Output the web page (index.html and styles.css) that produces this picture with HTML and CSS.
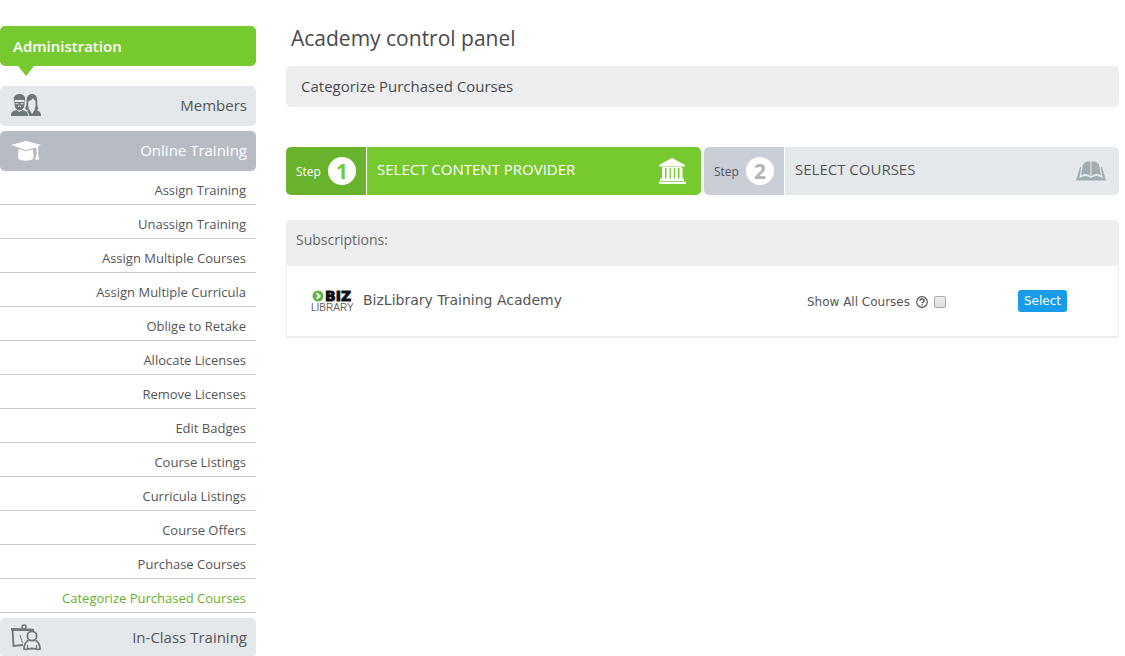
FILE: index.html
```html
<!DOCTYPE html>
<html lang="en">
<head>
    <meta charset="UTF-8">
    <meta name="viewport" content="width=device-width, initial-scale=1.0">
    <title>Academy control panel</title>
    <link rel="stylesheet" href="styles.css">
</head>
<body>
    <div class="page">
        <nav class="sidebar">
            <h2 class="sidebar-title">Administration</h2>

            <a href="#" class="menu-item">
                <svg class="menu-icon" viewBox="0 0 30 24" fill="#6f7679">
                    <path d="M3 7C2 2 5 0 8.500 0S15 2 14 7l-.6 1.200-.2-2.200H3.800l-.2 2.200z"/>
                    <path d="M3.500 8h10v2.500c0 3-2.300 6-5 6s-5-3-5-6z"/>
                    <path d="M4.500 6.500h8v1h-8zM4.500 9.200h3v1h-3zM9.500 9.200h3v1h-3z" fill="#e4e8eb"/>
                    <path d="M7 12.500q1.500-1 3 0" stroke="#e4e8eb" fill="none"/>
                    <path d="M0 22c0-4 1.500-5 5.500-6l3 2 3-2c4 1 5.500 2 5.500 6z"/>
                    <path d="M21 0c-4 0-5.500 3-5.500 8 0 3-.5 5-1.500 7l3 1.500 1-1.500c-1-2-1-5-.5-8 2 0 4-1.500 4.500-3 .5 1.500 2 2 2.500 3.500.3 3 0 5.500-1 7.500l1 1.500 3-1.500c-1-2-1.200-4-1.200-7 0-5-1.300-8-5.300-8z"/>
                    <path d="M18 22c0-2-1-4-2-5l2.500-1.500L21 20l3-4.500c4 1 6 2.500 6 6.500z"/>
                </svg>
                <span>Members</span>
            </a>

            <a href="#" class="menu-item active">
                <svg class="menu-icon" viewBox="0 0 30 24" fill="#fff">
                    <path d="M0 6l15-4 15 4-3 1.500.3 8 .7 5-3.500.5.5-5 .8-.5-.3-7L15 11z"/>
                    <path d="M7.500 10l7.500 2.300 7-1.800.5 9c-3.500 3-11.500 3-15.500 0z"/>
                </svg>
                <span>Online Training</span>
            </a>

            <ul class="submenu">
                <li><a href="#">Assign Training</a></li>
                <li><a href="#">Unassign Training</a></li>
                <li><a href="#">Assign Multiple Courses</a></li>
                <li><a href="#">Assign Multiple Curricula</a></li>
                <li><a href="#">Oblige to Retake</a></li>
                <li><a href="#">Allocate Licenses</a></li>
                <li><a href="#">Remove Licenses</a></li>
                <li><a href="#">Edit Badges</a></li>
                <li><a href="#">Course Listings</a></li>
                <li><a href="#">Curricula Listings</a></li>
                <li><a href="#">Course Offers</a></li>
                <li><a href="#">Purchase Courses</a></li>
                <li><a href="#" class="current">Categorize Purchased Courses</a></li>
            </ul>

            <a href="#" class="menu-item">
                <svg class="menu-icon tall" viewBox="0 0 30 28" fill="none" stroke="#6f7679" stroke-width="1.800">
                    <path d="M12 21L2.500 22 1.500 5.500l20.500.4v2"/>
                    <path d="M0 5.200l22.500.7" stroke-width="2.500"/>
                    <circle cx="13" cy="3" r="2" stroke-width="1.500"/>
                    <path d="M9 11l2.500 8" stroke-width="1"/>
                    <circle cx="21" cy="12" r="4.700"/>
                    <path d="M18 16c-3 1.500-5 5-5 9 3 1 5-.5 8-.5s5 1.500 8 .5c0-4-2-7.500-5-9"/>
                    <path d="M16.500 25v-4M25.500 25v-4" stroke-width="1.200"/>
                </svg>
                <span>In-Class Training</span>
            </a>
        </nav>

        <main class="content">
            <h1>Academy control panel</h1>
            <div class="breadcrumb">Categorize Purchased Courses</div>

            <div class="steps">
                <div class="step active">
                    <div class="step-label">Step <span class="step-number">1</span></div>
                    <div class="step-body">
                        <span>SELECT CONTENT PROVIDER</span>
                        <svg class="step-icon" viewBox="0 0 30 28" fill="#fff">
                            <path d="M14 1L27 8v1.500H1V8zM4 10h20v1H4z"/>
                            <path d="M4 11h3v11H4zM8.500 11h3v11h-3zM12.800 11h3v11h-3zM17 11h3v11h-3zM21.500 11h3v11h-3z"/>
                            <path d="M2 21.500h24V24H2zM1 24.800h27V27H1z"/>
                        </svg>
                    </div>
                </div>
                <div class="step">
                    <div class="step-label">Step <span class="step-number">2</span></div>
                    <div class="step-body">
                        <span>SELECT COURSES</span>
                        <svg class="step-icon" viewBox="0 0 30 28" fill="#a2abb0">
                            <path d="M4 10h1.200L3.500 21q6-4 11.500 0 5.500-4 11.500 0L24.800 10H26l4 13.500H0z"/>
                            <path d="M7 7.500Q10.500 3.500 14.500 4.500v14.500Q10 15.500 5 18.200zM23 7.500Q19.500 3.500 15.500 4.500v14.500q4.500-3.500 9.500-.8z"/>
                            <path d="M3.500 20.300q6-4 11.500 0 5.500-4 11.500 0" fill="none" stroke="#e4e8eb"/>
                        </svg>
                    </div>
                </div>
            </div>

            <section class="panel">
                <h3 class="panel-title">Subscriptions:</h3>
                <div class="provider">
                    <svg class="provider-logo" viewBox="0 0 42 24" role="img" aria-label="BizLibrary">
                        <circle cx="7" cy="7" r="5.500" fill="#62b246"/>
                        <path d="M5.500 4.200L8.800 7l-3.300 2.800" fill="none" stroke="#fff" stroke-width="1.800"/>
                        <text class="logo-biz" x="14" y="12">BIZ</text>
                        <text class="logo-library" x="0" y="22">LIBRARY</text>
                    </svg>
                    <span class="provider-name">BizLibrary Training Academy</span>
                    <div class="show-all">
                        <label for="showAll">Show All Courses</label>
                        <svg class="help-icon" viewBox="0 0 12 12">
                            <circle cx="6" cy="6" r="5.300" fill="none" stroke="#555" stroke-width="1.200"/>
                            <path d="M4 4.800C4 2.400 8 2.400 8 4.700 8 6 6.100 6 6.100 7.300M6.100 8.200v1.300" fill="none" stroke="#555" stroke-width="1.400"/>
                        </svg>
                        <input type="checkbox" id="showAll">
                    </div>
                    <button type="button" class="select-btn">Select</button>
                </div>
            </section>
        </main>
    </div>
</body>
</html>
```
FILE: styles.css
```css
* {
    box-sizing: border-box;
}

body {
    margin: 0;
    background: #fff;
    color: #555;
    font-family: "Open Sans", sans-serif;
    font-size: 15px;
}

a {
    color: inherit;
    text-decoration: none;
}

.page {
    display: flex;
    gap: 30px;
    padding: 26px 6px 0 0;
}

/* Sidebar */
.sidebar {
    flex: 0 0 256px;
}

.sidebar-title {
    position: relative;
    margin: 0 0 20px;
    padding: 0 13px;
    background: #76ca30;
    border-radius: 5px;
    color: #fff;
    font-size: 15px;
    font-weight: 600;
    line-height: 40px;
}

.sidebar-title::after {
    content: "";
    position: absolute;
    top: 100%;
    left: 18px;
    border: 8px solid transparent;
    border-top: 10px solid #76ca30;
    border-bottom: 0;
}

.menu-item {
    display: flex;
    align-items: center;
    justify-content: space-between;
    height: 40px;
    margin-top: 5px;
    padding: 0 9px 0 11px;
    background: #e4e8eb;
    border-radius: 5px;
}

.menu-item span {
    padding-bottom: 2px;
}

.menu-item.active {
    background: #b7bcc4;
    color: #fff;
}

.menu-icon {
    width: 30px;
    height: 24px;
}

.menu-icon.tall {
    height: 28px;
}

.submenu {
    margin: 0;
    padding: 0;
    list-style: none;
    font-size: 13px;
    text-align: right;
}

.submenu a {
    display: block;
    height: 34px;
    padding: 5px 10px 0 0;
    border-bottom: 1px solid #ccc;
    line-height: 28px;
}

.submenu .current {
    color: #67b02c;
}

/* Main column */
.content {
    flex: 1;
}

h1 {
    margin: 0 0 16px;
    padding-left: 5px;
    color: #4a4a4a;
    font-size: 21px;
    font-weight: 400;
    line-height: 24px;
}

.breadcrumb {
    padding: 0 15px;
    background: #edeef0;
    border-radius: 5px;
    color: #4a4a4a;
    line-height: 41px;
}

.steps {
    display: flex;
    gap: 3px;
    margin: 40px 0 25px;
}

.step {
    display: flex;
    flex: 1;
    gap: 1px;
    height: 48px;
    border-radius: 5px;
    overflow: hidden;
}

.step-label {
    display: flex;
    align-items: center;
    justify-content: space-between;
    width: 80px;
    padding: 0 10px;
    background: #caced6;
    font-size: 12px;
}

.step-number {
    width: 28px;
    border-radius: 50%;
    background: #fff;
    color: #b5b5b5;
    font-size: 21px;
    font-weight: 700;
    line-height: 28px;
    text-align: center;
}

.step-body {
    display: flex;
    flex: 1;
    align-items: center;
    justify-content: space-between;
    padding: 0 13px 0 10px;
    background: #e4e8eb;
}

.step-body span {
    padding-bottom: 4px;
}

.step-icon {
    width: 30px;
    height: 28px;
}

.step.active {
    color: #fff;
}

.step.active .step-label {
    background: #68b32b;
}

.step.active .step-number {
    color: #76ca30;
}

.step.active .step-body {
    background: #76ca30;
}

/* Subscriptions */
.panel-title {
    margin: 0;
    padding: 0 10px 6px;
    background: #edeef0;
    border-radius: 5px 5px 0 0;
    color: #666;
    font-size: 14px;
    font-weight: 400;
    line-height: 40px;
}

.provider {
    display: flex;
    align-items: center;
    height: 72px;
    padding: 0 51px 0 24px;
    border: 1px solid #edeef0;
    border-top: 0;
    border-bottom-width: 2px;
    font-family: Verdana, "DejaVu Sans", sans-serif;
}

.provider-logo {
    width: 42px;
    height: 24px;
    margin-right: 10px;
}

.logo-biz {
    fill: #111;
    stroke: #111;
    stroke-width: 1px;
    font: 700 14px "DejaVu Sans", sans-serif;
}

.logo-library {
    fill: #666;
    font: 10px "Liberation Sans", sans-serif;
}

.provider-name {
    flex: 1;
    padding-bottom: 2px;
    font-size: 14px;
}

.show-all {
    display: flex;
    align-items: center;
    gap: 6px;
    margin-right: 72px;
    padding-top: 2px;
    font-size: 12px;
}

.help-icon {
    width: 12px;
    height: 12px;
}

.show-all input {
    appearance: none;
    width: 12px;
    height: 12px;
    margin: 0;
    background: linear-gradient(#eee, #ddd);
    border: 1px solid #aaa;
    border-radius: 2px;
}

.select-btn {
    height: 22px;
    padding: 0 6px;
    background: #189be8;
    border: 0;
    border-radius: 3px;
    color: #fff;
    font-family: inherit;
    font-size: 12px;
    cursor: pointer;
}
```
